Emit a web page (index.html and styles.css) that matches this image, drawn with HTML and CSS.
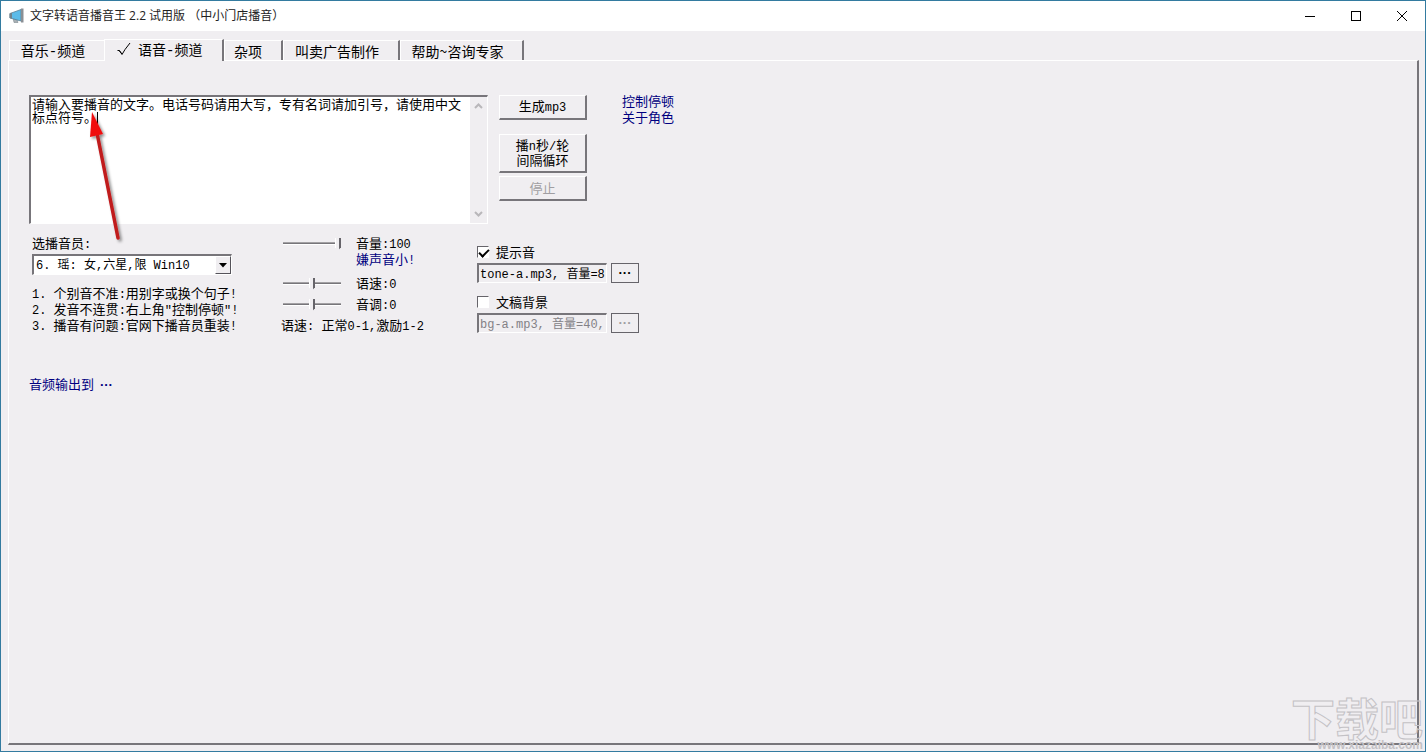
FILE: index.html
```html
<!DOCTYPE html>
<html lang="zh-CN">
<head>
<meta charset="utf-8">
<title>文字转语音播音王 2.2 试用版</title>
<link rel="stylesheet" href="styles.css">
</head>
<body>
<div class="window">
  <header class="titlebar">
    <svg class="app-icon" width="16" height="16" viewBox="0 0 16 16" aria-hidden="true">
      <path d="M4 10 l1 4.500 h4 l-1 -3z" fill="#a9b1b5" stroke="#6f7a80" stroke-width=".5"/>
      <path d="M1 5.500 L12 1.500 V13 L1 10Z" fill="#5cbbe8" stroke="#5a8094" stroke-width=".8"/>
      <path d="M12 .5 h2.500 v14 h-2.500z" fill="#8a8f94"/>
      <path d="M.5 5.500 L3 4.800 V10.700 L.5 10Z" fill="#73828b"/>
    </svg>
    <h1 class="title">文字转语音播音王 2.2 试用版 （中小门店播音）</h1>
    <div class="window-buttons">
      <button class="win-btn" aria-label="最小化"><svg width="12" height="12" viewBox="0 0 12 12"><path d="M1 6.500H11" stroke="#000" fill="none"/></svg></button>
      <button class="win-btn" aria-label="最大化"><svg width="12" height="12" viewBox="0 0 12 12"><rect x="1.500" y="1.500" width="9" height="9" stroke="#000" fill="none"/></svg></button>
      <button class="win-btn" aria-label="关闭"><svg width="12" height="12" viewBox="0 0 12 12"><path d="M1 1L11 11M11 1L1 11" stroke="#000" fill="none"/></svg></button>
    </div>
  </header>

  <nav class="tabs" role="tablist">
    <button class="tab tab-music" role="tab">音乐<span class="dash">-</span>频道</button>
    <button class="tab tab-active" role="tab" aria-selected="true">
      <svg width="14" height="14" viewBox="0 0 14 14" aria-hidden="true"><path d="M.5 8.500 H2.500 L5 12.500 L8 7.500 L13 1 M2 8.500 L5 12" stroke="#000" fill="none"/></svg>
      <span>语音<span class="dash">-</span>频道</span>
    </button>
    <button class="tab tab-misc" role="tab">杂项</button>
    <button class="tab tab-ad" role="tab">叫卖广告制作</button>
    <button class="tab tab-help" role="tab">帮助~咨询专家</button>
  </nav>

  <main class="panel">
    <section class="compose">
      <div class="editor">
        <textarea class="editor-text" aria-label="播音文字">请输入要播音的文字。电话号码请用大写，专有名词请加引号，请使用中文标点符号。</textarea>
        <div class="scrollbar" aria-hidden="true">
          <svg width="9" height="6" viewBox="0 0 9 6"><path d="M1 5L4.500 1.500L8 5" stroke="#b9b7ba" stroke-width="2" fill="none"/></svg>
          <svg width="9" height="6" viewBox="0 0 9 6"><path d="M1 1L4.500 4.500L8 1" stroke="#b9b7ba" stroke-width="2" fill="none"/></svg>
        </div>
        <i class="caret"></i>
        <svg class="pointer" width="50" height="144" viewBox="0 0 50 144" aria-hidden="true">
          <defs><filter id="shade" x="-50%" y="-20%" width="200%" height="140%"><feDropShadow dx="2" dy="2" stdDeviation="1.500" flood-color="#000" flood-opacity=".45"/></filter></defs>
          <g filter="url(#shade)">
            <path d="M17 22 L38 127" stroke="#c01a1e" stroke-width="3.500" stroke-linecap="round"/>
            <path d="M12 1 L23 23 L10 26 Z" fill="#f00c10"/>
          </g>
        </svg>
      </div>
      <div class="actions">
        <button class="btn btn-make">生成<span class="lat">mp3</span></button>
        <button class="btn btn-loop">播<span class="lat">n</span>秒<span class="lat">/</span>轮<br>间隔循环</button>
        <button class="btn btn-stop" disabled>停止</button>
      </div>
      <div class="help-links">
        <a class="link" href="#pause">控制停顿</a>
        <a class="link" href="#roles">关于角色</a>
      </div>
    </section>

    <section class="settings">
      <div class="voice">
        <label for="voice">选播音员<span class="lat">:</span></label>
        <div class="combo">
          <select id="voice" class="combo-select"><option>6. 瑶: 女,六星,限 Win10</option></select>
          <span class="combo-arrow"><svg width="8" height="5" viewBox="0 0 8 5"><path d="M0 0H8L4 4.500Z"/></svg></span>
        </div>
        <ul class="tips">
          <li><span class="lat">1. </span>个别音不准<span class="lat">:</span>用别字或换个句子<span class="lat">!</span></li>
          <li><span class="lat">2. </span>发音不连贯<span class="lat">:</span>右上角<span class="lat">"</span>控制停顿<span class="lat">"!</span></li>
          <li><span class="lat">3. </span>播音有问题<span class="lat">:</span>官网下播音员重装<span class="lat">!</span></li>
        </ul>
      </div>

      <div class="sliders">
        <div class="slider-row">
          <input class="slider" id="volume" type="range" min="0" max="100" value="100">
          <label for="volume">音量<span class="lat">:100</span></label>
        </div>
        <a class="link louder" href="#louder">嫌声音小<span class="lat">!</span></a>
        <div class="slider-row">
          <input class="slider" id="speed" type="range" min="-10" max="10" value="0">
          <label for="speed">语速<span class="lat">:0</span></label>
        </div>
        <div class="slider-row">
          <input class="slider" id="pitch" type="range" min="-10" max="10" value="0">
          <label for="pitch">音调<span class="lat">:0</span></label>
        </div>
        <p class="hint">语速<span class="lat">: </span>正常<span class="lat">0-1,</span>激励<span class="lat">1-2</span></p>
      </div>

      <div class="extras">
        <label class="check"><input type="checkbox" class="box" checked>提示音</label>
        <div class="file-row">
          <input class="file" type="text" aria-label="提示音文件" value="tone-a.mp3, 音量=80">
          <button class="more" aria-label="选择提示音">···</button>
        </div>
        <label class="check"><input type="checkbox" class="box">文稿背景</label>
        <div class="file-row">
          <input class="file" type="text" aria-label="背景文件" value="bg-a.mp3, 音量=40," disabled>
          <button class="more" aria-label="选择背景" disabled>···</button>
        </div>
      </div>
    </section>

    <a class="link output" href="#output">音频输出到 <b class="dots">···</b></a>
  </main>

  <div class="watermark" aria-hidden="true">
    <span class="wm-name">下载吧</span>
    <span class="wm-site">www.xiazaiba.com</span>
  </div>
</div>
</body>
</html>
```

FILE: styles.css
```css
* { box-sizing: border-box; }

body {
  margin: 0;
  color: #000;
  font: 13px/16px "Noto Sans CJK SC", sans-serif;
}

button, input, select, textarea {
  margin: 0;
  padding: 0;
  border: 0;
  border-radius: 0;
  background: none;
  color: inherit;
  font: inherit;
}

.lat {
  font-family: "Liberation Mono", monospace;
  font-size: 12px;
  line-height: 12px;
  white-space: pre;
}

.link { color: #000080; text-decoration: none; }

.window {
  position: relative;
  display: flex;
  flex-direction: column;
  min-height: 100vh;
  padding: 0 6px 6px 7px;
  border: 1px solid #337ba0;
  background: #f0eef1;
  overflow: hidden;
}

/* Title bar */
.titlebar {
  display: flex;
  align-items: center;
  height: 30px;
  margin: 0 -6px 0 -7px;
  padding-left: 8px;
  background: #fff;
}
.app-icon { margin-right: 5px; }
.title {
  flex: 1;
  margin: 0;
  color: #222;
  font: 400 12px/16px "Open Sans", "Noto Sans CJK SC", sans-serif;
  white-space: pre;
}
.window-buttons { display: flex; }
.win-btn {
  display: flex;
  align-items: center;
  justify-content: center;
  width: 46px;
  height: 28px;
}

/* Tabs */
.tabs { display: flex; align-items: flex-end; height: 29px; padding: 0 1px; }
.tab {
  height: 20px;
  border-top: 1px solid #fff;
  border-left: 1px solid #fff;
  border-right: 2px solid #77757a;
  font-size: 14px;
  line-height: 18px;
  white-space: nowrap;
}
.dash { font-family: "Liberation Mono", monospace; }
.tab-music { width: 95px; padding-right: 8px; border-right: 0; }
.tab-active {
  position: relative;
  display: flex;
  gap: 7px;
  width: 120px;
  height: 22px;
  margin-bottom: -1px;
  padding: 0 0 0 12px;
  background: #f0eef1;
}
.tab-active svg { margin-top: 2px; }
.tab-misc { width: 59px; padding-right: 10px; }
.tab-ad { width: 117px; padding-right: 8px; }
.tab-help { width: 124px; padding-right: 8px; }

/* Panel */
.panel {
  flex: 1;
  padding: 34px 20px;
  border-top: 1px solid #fff;
  border-left: 1px solid #fff;
  border-right: 2px solid #77757a;
  border-bottom: 2px solid #77757a;
}

.compose { display: flex; align-items: flex-start; }
.editor {
  position: relative;
  display: flex;
  width: 459px;
  height: 129px;
  border: 1px solid #fff;
  border-top: 2px solid #77757a;
  border-left: 2px solid #77757a;
  background: #fff;
}
.editor-text {
  flex: 1;
  padding: 0 1px;
  line-height: 13px;
  resize: none;
  outline: 0;
  overflow: hidden;
}
.scrollbar {
  display: flex;
  flex-direction: column;
  align-items: center;
  justify-content: space-between;
  width: 17px;
  padding: 6px 0;
  background: #f0eef1;
}
.caret { position: absolute; left: 66px; top: 15px; width: 1px; height: 13px; background: #000; }
.pointer { position: absolute; left: 49px; top: 14px; }

.actions { display: flex; flex-direction: column; width: 88px; margin-left: 11px; }
.btn {
  height: 25px;
  padding-bottom: 2px;
  border: 1px solid #fff;
  border-right: 2px solid #77757a;
  border-bottom: 2px solid #77757a;
  line-height: 13px;
}
.btn-loop { height: 39px; margin: 14px 0 3px; }
.btn:disabled { color: #a09ea2; }

.help-links { display: flex; flex-direction: column; margin: -2px 0 0 35px; }

/* Settings */
.settings { display: flex; align-items: flex-start; padding: 11px 0 0 3px; }
.voice { width: 249px; }
.voice label { display: block; }
.combo {
  position: relative;
  display: flex;
  width: 200px;
  height: 21px;
  margin: 3px 0 10px;
  padding: 1px;
  border: 1px solid #fff;
  border-top: 2px solid #77757a;
  border-left: 2px solid #77757a;
  background: #fff;
}
.combo-select {
  flex: 1;
  padding: 1px 0 0 1px;
  appearance: none;
  font: 12px/16px "Liberation Mono", "Noto Sans CJK SC", monospace;
}
.combo-arrow {
  position: absolute;
  top: 0;
  right: 0;
  bottom: 0;
  display: flex;
  align-items: center;
  justify-content: center;
  width: 16px;
  border: 1px solid #fff;
  border-right-color: #55535a;
  border-bottom-color: #55535a;
  background: #f0eef1;
  pointer-events: none;
}
.tips { margin: 0; padding: 0; list-style: none; white-space: nowrap; }

.sliders { display: flex; flex-direction: column; width: 196px; }
.slider-row { display: flex; align-items: center; height: 16px; margin-bottom: 5px; }
.slider-row:first-child { margin-bottom: 0; }
.slider { width: 58px; height: 16px; margin: 0 15px 0 2px; appearance: none; }
.slider::-webkit-slider-runnable-track {
  height: 3px;
  border-top: 1px solid #a3a1a4;
  border-bottom: 1px solid #fff;
  background: #77757a;
}
.slider::-webkit-slider-thumb {
  width: 6px;
  height: 13px;
  margin-top: -5px;
  appearance: none;
  background: linear-gradient(90deg, #fff 1px, #f0eef1 1px 4px, #66646a 4px);
  clip-path: polygon(0 0, 100% 0, 100% 75%, 50% 100%, 0 75%);
}
.louder { margin: 0 0 8px 75px; line-height: 15px; }
.hint { margin: 0; }

.extras { display: flex; flex-direction: column; padding-top: 8px; }
.check { display: flex; align-items: center; gap: 7px; height: 17px; margin-bottom: 3px; }
.box {
  width: 12px;
  height: 12px;
  border: 1px solid #fff;
  border-top-color: #66646a;
  border-left-color: #66646a;
  background: #fff;
  appearance: none;
}
.box:checked::before {
  content: "";
  display: block;
  width: 8px;
  height: 4px;
  margin: 2px 1px;
  border-left: 2px solid #000;
  border-bottom: 2px solid #000;
  transform: rotate(-45deg);
}
.file-row { display: flex; gap: 4px; margin-bottom: 10px; }
.file {
  width: 130px;
  height: 20px;
  padding: 0 1px 1px;
  border: 1px solid #fff;
  border-top: 2px solid #77757a;
  border-left: 2px solid #77757a;
  font: 12px/16px "Liberation Mono", "Noto Sans CJK SC", monospace;
}
.file:disabled { color: #838186; }
.more {
  width: 28px;
  height: 20px;
  border: 1px solid #66646a;
  font: 700 13px/14px "Liberation Sans", sans-serif;
}
.more:disabled { color: #a09ea2; }

.output { display: inline-block; margin-top: 33px; }
.dots { margin-left: 3px; font-family: "Liberation Sans", sans-serif; }

/* Site mark */
.watermark {
  position: absolute;
  right: 2px;
  bottom: 0;
  display: flex;
  flex-direction: column;
  align-items: flex-end;
  pointer-events: none;
}
.wm-name {
  color: transparent;
  font-size: 44px;
  font-weight: 700;
  line-height: 44px;
  -webkit-text-stroke: 1px #c3c1c5;
}
.wm-site { color: #c3c1c5; font: 700 12px/12px "Liberation Sans", sans-serif; }
```
